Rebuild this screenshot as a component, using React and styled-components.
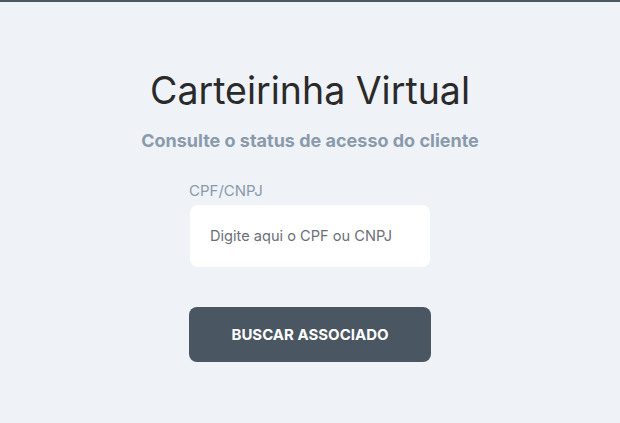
import React from 'react';
import styled, { createGlobalStyle } from 'styled-components';

const GlobalStyle = createGlobalStyle`
  html, body {
    margin: 0;
    padding: 0;
    background: #eff3f8;
    font-family: Inter, "Noto Sans", Arial, sans-serif;
  }
`;

const Page = styled.div`
  min-height: 423px;
  box-sizing: border-box;
  border-top: 2px solid #4a5661;
  display: flex;
  flex-direction: column;
  align-items: center;
  padding-top: 67px;
`;

const Title = styled.h1`
  margin: 0;
  font-size: 37.5px;
  font-weight: 400;
  line-height: 44px;
  color: #2a2a2a;
`;

const Subtitle = styled.p`
  margin: 17px 0 0;
  font-size: 18px;
  font-weight: 700;
  line-height: 22px;
  color: #8a9aac;
`;

const Form = styled.form`
  width: 242px;
  margin-top: 30px;
  display: flex;
  flex-direction: column;
`;

const Label = styled.label`
  font-size: 15px;
  line-height: 18px;
  color: #8a9aac;
  margin-bottom: 5px;
`;

const Input = styled.input`
  width: 240px;
  height: 62px;
  box-sizing: border-box;
  margin-left: 1px;
  border: none;
  border-radius: 8px;
  background: #ffffff;
  padding: 0 20px;
  font-family: inherit;
  font-size: 14.6px;
  color: #333;
  outline: none;
  &::placeholder {
    color: #6b6f78;
  }
`;

const Button = styled.button`
  margin-top: 40px;
  height: 55px;
  border: none;
  border-radius: 8px;
  background: #4a5762;
  color: #ffffff;
  font-family: inherit;
  font-size: 15px;
  font-weight: 700;
  cursor: pointer;
`;

export default function App() {
  return (
    <>
      <GlobalStyle />
      <Page>
        <Title>Carteirinha Virtual</Title>
        <Subtitle>Consulte o status de acesso do cliente</Subtitle>
        <Form onSubmit={(e) => e.preventDefault()}>
          <Label htmlFor="doc">CPF/CNPJ</Label>
          <Input id="doc" placeholder="Digite aqui o CPF ou CNPJ" />
          <Button type="submit">BUSCAR ASSOCIADO</Button>
        </Form>
      </Page>
    </>
  );
}
